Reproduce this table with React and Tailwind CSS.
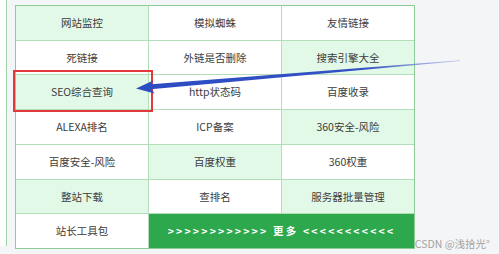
const cells = [
    { t: "网站监控", g: true },
    { t: "模拟蜘蛛" },
    { t: "友情链接" },
    { t: "死链接" },
    { t: "外链是否删除" },
    { t: "搜索引擎大全", g: true },
    { t: "SEO综合查询", g: true },
    { t: "http状态码" },
    { t: "百度收录" },
    { t: "ALEXA排名" },
    { t: "ICP备案" },
    { t: "360安全-风险", g: true },
    { t: "百度安全-风险" },
    { t: "百度权重", g: true },
    { t: "360权重" },
    { t: "整站下载", g: true },
    { t: "查排名" },
    { t: "服务器批量管理", g: true },
    { t: "站长工具包" },
];

function Arrow() {
    return (
        <svg className="pointer-events-none absolute left-0 top-0" width="499" height="254" viewBox="0 0 499 254">
            <defs>
                <linearGradient id="ln" x1="150" y1="0" x2="460" y2="0" gradientUnits="userSpaceOnUse">
                    <stop offset="0" stopColor="#2c4cc2" />
                    <stop offset="0.7" stopColor="#3552c4" />
                    <stop offset="1" stopColor="#9aa9dc" stopOpacity="0.6" />
                </linearGradient>
            </defs>
            <polygon points="148,84.6 460,60.2 460,61 148,89.4" fill="url(#ln)" />
            <polygon points="136,88.5 153.3,80.4 150,87.3 154.5,93.4" fill="#2c4cc2" />
        </svg>
    );
}

export default function App() {
    const cell = "flex items-center justify-center text-[10.5px] text-[#3c3c3c]";

    return (
        <div className="relative flex h-[254px] w-[499px] overflow-hidden bg-[#f4f5f7]" style={{ fontFamily: '"Noto Sans CJK SC", "Noto Sans", sans-serif' }}>
            <div className="h-[246px] w-[7px] border-r border-[#9ed3a8] bg-white" />
            <div className="ml-[8px] mt-[5px] grid h-[244px] w-[400px] grid-cols-3 grid-rows-7 gap-px border border-[#8dcb98] bg-[#b2dfba]">
                {cells.map((c) => (
                    <div key={c.t} className={`${cell} ${c.g ? "bg-[#e3f9e7]" : "bg-white"}`}>{c.t}</div>
                ))}
                <div className="col-span-2 flex items-center justify-center bg-[#2ea84d] text-[10.5px] font-semibold tracking-[2.2px] text-white">
                    &gt;&gt;&gt;&gt;&gt;&gt;&gt;&gt;&gt;&gt;&gt;&gt; 更多 &lt;&lt;&lt;&lt;&lt;&lt;&lt;&lt;&lt;&lt;&lt;
                </div>
            </div>

            <span className="absolute bottom-[5px] right-[9px] whitespace-nowrap text-[10.5px] leading-none text-[#a3a3a3]">CSDN @浅拾光°</span>
            <div className="absolute left-[13px] top-[70px] h-[42px] w-[140px] border-2 border-[#e2393b]" />
            <Arrow />
        </div>
    );
}
